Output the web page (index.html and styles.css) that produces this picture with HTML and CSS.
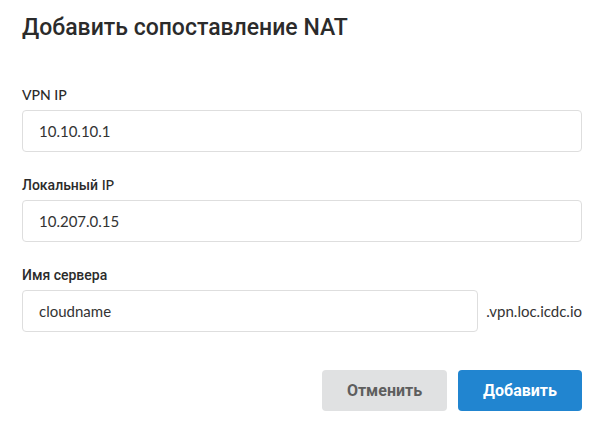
FILE: index.html
```html
<!DOCTYPE html>
<html lang="ru">
<head>
<meta charset="utf-8">
<link rel="stylesheet" href="styles.css">
</head>
<body>
<div class="modal">
  <h1 class="title">Добавить сопоставление NAT</h1>
  <form class="form">
    <div class="field">
      <label class="label">VPN IP</label>
      <div class="input">10.10.10.1</div>
    </div>
    <div class="field">
      <label class="label"><span class="cyr">Локальный</span> IP</label>
      <div class="input">10.207.0.15</div>
    </div>
    <div class="field">
      <label class="label"><span class="cyr">Имя сервера</span></label>
      <div class="row">
        <div class="input grow">cloudname</div>
        <span class="suffix">.vpn.loc.icdc.io</span>
      </div>
    </div>
    <div class="actions">
      <button type="button" class="btn btn-cancel">Отменить</button>
      <button type="button" class="btn btn-primary">Добавить</button>
    </div>
  </form>
</div>
</body>
</html>
```

FILE: styles.css
```css
html, body {
  margin: 0;
  padding: 0;
  background: #ffffff;
}
.modal {
  width: 560px;
  padding: 14px 20px 0 22px;
  font-family: Lato, "Liberation Sans", Arial, sans-serif;
  color: #333333;
}
.title {
  margin: 0;
  font-family: Roboto, "Liberation Sans", Arial, sans-serif;
  font-size: 23px;
  font-weight: 500;
  line-height: 28px;
  color: #2b2b2b;
}
.form {
  display: flex;
  flex-direction: column;
  gap: 25px;
  margin-top: 45px;
}
.field {
  display: flex;
  flex-direction: column;
  gap: 7px;
}
.label {
  font-size: 14px;
  font-weight: 500;
  line-height: 16px;
  color: #2b2b2b;
}
.cyr {
  font-family: Roboto, "Liberation Sans", Arial, sans-serif;
  font-weight: 500;
}
.input {
  box-sizing: border-box;
  height: 42px;
  border: 1px solid #dedede;
  border-radius: 4px;
  padding: 0 16px;
  display: flex;
  align-items: center;
  font-size: 15px;
  color: #333333;
}
.row {
  display: flex;
  align-items: center;
  gap: 8px;
}
.grow {
  flex: 1;
}
.suffix {
  font-size: 15px;
  color: #333333;
}
.actions {
  display: flex;
  justify-content: flex-end;
  gap: 11px;
  margin-top: 13px;
}
.btn {
  height: 41px;
  padding: 0;
  border: none;
  border-radius: 4px;
  font-family: Roboto, "Liberation Sans", Arial, sans-serif;
  font-size: 16px;
  font-weight: 700;
}
.btn-cancel {
  width: 125px;
  background: #e0e1e2;
  color: #5e5e5e;
}
.btn-primary {
  width: 124px;
  background: #2185d0;
  color: #ffffff;
}
```
